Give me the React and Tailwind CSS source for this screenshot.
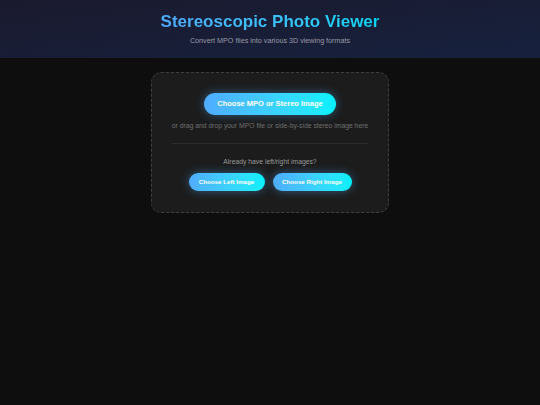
import React from 'react';

const GlowButton = ({ children, className = '' }) => (
  <button
    type="button"
    className={`rounded-full bg-gradient-to-r from-[#4facfe] to-[#00f2fe] font-bold text-white shadow-[0_0_10px_rgba(79,172,254,0.45)] ${className}`}
  >
    {children}
  </button>
);

const App = () => {
  return (
    <div
      className="min-h-[405px] bg-[#0e0e0e]"
      style={{ fontFamily: '"Liberation Sans", Arial, sans-serif' }}
    >
      <header className="flex h-[58px] flex-col items-center bg-gradient-to-br from-[#1a1a2e] to-[#16213e] pt-[12px]">
        <h1 className="bg-gradient-to-r from-[#4facfe] to-[#00d4f0] bg-clip-text text-[17px] font-bold leading-[20px] text-transparent">
          Stereoscopic Photo Viewer
        </h1>
        <p className="mt-[4px] text-[7.2px] leading-[9px] text-[#9a9aa8]">
          Convert MPO files into various 3D viewing formats
        </p>
      </header>

      <main className="flex justify-center pt-[14px]">
        <div className="flex w-[238px] flex-col items-center rounded-[10px] border border-dashed border-[#3f3f3f] bg-[#1c1c1c] px-[16px] pb-[21px] pt-[20px]">
          <GlowButton className="h-[22px] w-[132px] text-[7.5px]">
            Choose MPO or Stereo Image
          </GlowButton>
          <p className="mt-[7px] whitespace-nowrap text-[6.8px] leading-[8px] text-[#6f6f6f]">
            or drag and drop your MPO file or side-by-side stereo image here
          </p>
          <div className="mt-[13px] h-px w-[196px] bg-[#2c2c2c]" />
          <p className="mt-[13px] text-[6.8px] leading-[9px] text-[#9a9a9a]">
            Already have left/right images?
          </p>
          <div className="mt-[7px] flex gap-[8px]">
            <GlowButton className="h-[18px] w-[76px] text-[6.2px]">
              Choose Left Image
            </GlowButton>
            <GlowButton className="h-[18px] w-[79px] text-[6.2px]">
              Choose Right Image
            </GlowButton>
          </div>
        </div>
      </main>
    </div>
  );
};

export default App;
